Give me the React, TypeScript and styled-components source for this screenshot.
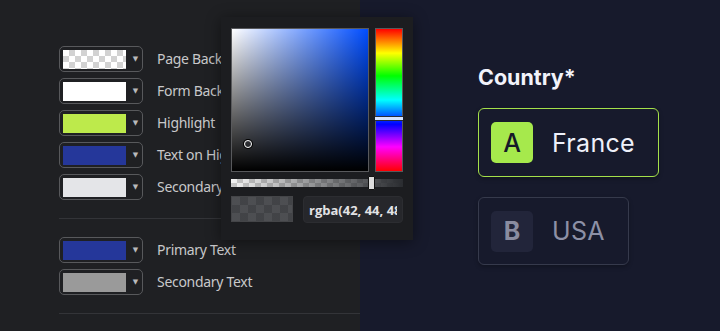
import styled, { createGlobalStyle } from 'styled-components';

const GlobalStyle = createGlobalStyle`
  html, body {
    margin: 0;
    padding: 0;
    background: #1f2023;
  }
  * {
    box-sizing: border-box;
  }
`;

type Swatch = { label: string; color: string };

const themeColors: Swatch[] = [
  { label: 'Page Background', color: 'transparent' },
  { label: 'Form Background', color: '#ffffff' },
  { label: 'Highlight', color: '#bdea4b' },
  { label: 'Text on Highlight', color: '#25379a' },
  { label: 'Secondary Background', color: '#e4e5e8' },
];

const textColors: Swatch[] = [
  { label: 'Primary Text', color: '#25379a' },
  { label: 'Secondary Text', color: '#9a9a9a' },
];

export default function App() {
  return (
    <>
      <GlobalStyle />
      <Page>
        <SettingsPanel>
          <Section>
            {themeColors.map(({ label, color }) => (
              <ColorRow key={label}>
                <SwatchButton>
                  <SwatchFill $color={color} />
                  <Caret>▼</Caret>
                </SwatchButton>
                <RowLabel>{label}</RowLabel>
              </ColorRow>
            ))}
          </Section>
          <Section>
            {textColors.map(({ label, color }) => (
              <ColorRow key={label}>
                <SwatchButton>
                  <SwatchFill $color={color} />
                  <Caret>▼</Caret>
                </SwatchButton>
                <RowLabel>{label}</RowLabel>
              </ColorRow>
            ))}
          </Section>
        </SettingsPanel>

        <PreviewPanel>
          <Question>Country*</Question>
          <Choices>
            <Choice $selected>
              <KeyBadge $selected>A</KeyBadge>
              <ChoiceText $selected>France</ChoiceText>
            </Choice>
            <Choice>
              <KeyBadge>B</KeyBadge>
              <ChoiceText>USA</ChoiceText>
            </Choice>
          </Choices>
        </PreviewPanel>

        <Picker>
          <PickerTop>
            <SaturationArea $hue={222}>
              <SatCursor style={{ left: 16, top: 115 }} />
            </SaturationArea>
            <HueBar>
              <HueThumb style={{ top: 87 }} />
            </HueBar>
          </PickerTop>
          <AlphaTrack>
            <AlphaThumb style={{ left: 137 }} />
          </AlphaTrack>
          <PickerBottom>
            <ColorPreview />
            <ValueInput readOnly value="rgba(42, 44, 48, 0)" />
          </PickerBottom>
        </Picker>
      </Page>
    </>
  );
}

const Page = styled.div`
  position: relative;
  width: 720px;
  height: 331px;
  overflow: hidden;
  display: grid;
  grid-template-columns: 360px 360px;
  font-family: 'Noto Sans', 'Open Sans', sans-serif;
`;

const SettingsPanel = styled.aside`
  background: #1f2023;
  padding: 28px 0 0 59px;
  display: flex;
  flex-direction: column;
`;

const Section = styled.div`
  display: flex;
  flex-direction: column;
  gap: 6px;
  padding: 18px 0;
  border-bottom: 1px solid #333438;
`;

const ColorRow = styled.div`
  display: flex;
  align-items: center;
  gap: 14px;
  height: 26px;
`;

const SwatchButton = styled.button`
  display: flex;
  align-items: center;
  width: 84px;
  height: 26px;
  padding: 0 0 0 3px;
  border: 1px solid #58595c;
  border-radius: 5px;
  background: transparent;
  cursor: pointer;
`;

const SwatchFill = styled.span<{ $color: string }>`
  display: block;
  width: 63px;
  height: 19px;
  background: ${({ $color }) =>
    $color === 'transparent'
      ? 'repeating-conic-gradient(#d2d2d2 0 25%, #ffffff 0 50%) 0 0 / 12px 12px'
      : $color};
`;

const Caret = styled.span`
  flex: 1;
  text-align: center;
  font-size: 7px;
  color: #b9b9bb;
  font-family: 'DejaVu Sans', sans-serif;
  padding-left: 3px;
`;

const RowLabel = styled.span`
  font-size: 14px;
  letter-spacing: -0.3px;
  color: #c8c8ca;
  white-space: nowrap;
  margin-top: -2px;
`;

const PreviewPanel = styled.main`
  background: #171a2c;
  padding: 61px 0 0 118px;
  font-family: Inter, 'Noto Sans', sans-serif;
`;

const Question = styled.h2`
  margin: 0;
  font-size: 21.5px;
  font-weight: 700;
  color: #f2f3fb;
  line-height: 32px;
`;

const Choices = styled.div`
  margin-top: 15px;
  display: flex;
  flex-direction: column;
  align-items: flex-start;
  gap: 20px;
`;

const Choice = styled.div<{ $selected?: boolean }>`
  display: flex;
  align-items: center;
  gap: 19px;
  height: ${({ $selected }) => ($selected ? '69px' : '68px')};
  width: ${({ $selected }) => ($selected ? '181px' : '151px')};
  padding-left: 12px;
  border-radius: 6px;
  border: 1px solid ${({ $selected }) => ($selected ? '#a4e04a' : '#363a4c')};
  background: #171a2c;
  box-shadow: 0 2px 4px rgba(0, 0, 0, 0.25);
`;

const KeyBadge = styled.span<{ $selected?: boolean }>`
  width: 42px;
  height: 41px;
  border-radius: 5px;
  display: flex;
  align-items: center;
  justify-content: center;
  font-size: 25px;
  font-weight: ${({ $selected }) => ($selected ? 500 : 700)};
  background: ${({ $selected }) => ($selected ? '#a6e94c' : '#22253a')};
  color: ${({ $selected }) => ($selected ? '#161a28' : '#8a8ca0')};
`;

const ChoiceText = styled.span<{ $selected?: boolean }>`
  font-size: 25px;
  letter-spacing: 0.3px;
  color: ${({ $selected }) => ($selected ? '#eef0fa' : '#8d90a6')};
`;

const Picker = styled.div`
  position: absolute;
  left: 221px;
  top: 17px;
  width: 192px;
  height: 223px;
  padding: 11px 10px 0;
  background: #1c1d20;
  box-shadow: 0 2px 14px rgba(0, 0, 0, 0.45);
  display: flex;
  flex-direction: column;
`;

const PickerTop = styled.div`
  display: flex;
  gap: 6px;
  height: 144px;
`;

const SaturationArea = styled.div<{ $hue: number }>`
  position: relative;
  width: 138px;
  height: 144px;
  border: 1px solid #58595c;
  background:
    linear-gradient(to top, #000, rgba(0, 0, 0, 0)),
    linear-gradient(to right, #fff, rgba(255, 255, 255, 0)),
    hsl(${({ $hue }) => $hue}, 100%, 50%);
`;

const SatCursor = styled.span`
  position: absolute;
  width: 8px;
  height: 8px;
  margin: -4px 0 0 -4px;
  border-radius: 50%;
  border: 1.5px solid #fff;
  box-shadow: 0 0 0 1px #000;
`;

const HueBar = styled.div`
  position: relative;
  width: 28px;
  height: 144px;
  border: 1px solid #58595c;
  background: linear-gradient(
    to bottom,
    #ff0000,
    #ffff00 17%,
    #00ff00 33%,
    #00ffff 50%,
    #0000ff 67%,
    #ff00ff 83%,
    #ff0000
  );
`;

const HueThumb = styled.span`
  position: absolute;
  left: -1px;
  right: -1px;
  height: 5px;
  background: #d6e4ff;
  border-top: 1px solid #2a2c35;
  border-bottom: 1px solid #2a2c35;
`;

const AlphaTrack = styled.div`
  position: relative;
  margin-top: 7px;
  height: 8px;
  background:
    linear-gradient(to right, rgba(42, 44, 48, 0), rgb(42, 44, 48)),
    repeating-conic-gradient(#c8c8c8 0 25%, #f4f4f4 0 50%) 0 0 / 12px 8px;
`;

const AlphaThumb = styled.span`
  position: absolute;
  top: -3px;
  width: 7px;
  height: 14px;
  background: #dcdcdc;
  border: 1px solid #111;
  border-radius: 1px;
`;

const PickerBottom = styled.div`
  display: flex;
  gap: 10px;
  margin-top: 9px;
  height: 27px;
`;

const ColorPreview = styled.div`
  width: 62px;
  height: 26px;
  border: 1px solid #444548;
  background:
    linear-gradient(rgba(42, 44, 48, 0.45), rgba(42, 44, 48, 0.45)),
    repeating-conic-gradient(#555659 0 25%, #6a6b6e 0 50%) 0 0 / 16px 16px;
`;

const ValueInput = styled.input`
  flex: 1;
  min-width: 0;
  height: 27px;
  padding: 0 5px;
  border: 1px solid #2c2d31;
  border-radius: 4px;
  background: #26272b;
  color: #e2e2e4;
  font-family: 'Open Sans', 'Noto Sans', sans-serif;
  font-weight: 700;
  font-size: 13px;
  outline: none;
`;
